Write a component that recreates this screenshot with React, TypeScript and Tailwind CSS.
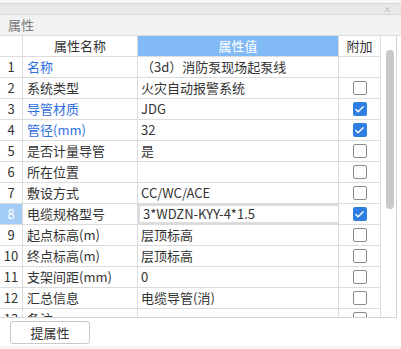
import { Check, X } from "lucide-react";

interface Row {
  no: number;
  name: string;
  value: string;
  blue?: boolean;
  check?: boolean | null;
  selected?: boolean;
}

const rows: Row[] = [
  { no: 1, name: "名称", value: "（3d）消防泵现场起泵线", blue: true, check: null },
  { no: 2, name: "系统类型", value: "火灾自动报警系统", check: false },
  { no: 3, name: "导管材质", value: "JDG", blue: true, check: true },
  { no: 4, name: "管径(mm)", value: "32", blue: true, check: true },
  { no: 5, name: "是否计量导管", value: "是", check: false },
  { no: 6, name: "所在位置", value: "", check: false },
  { no: 7, name: "敷设方式", value: "CC/WC/ACE", check: false },
  { no: 8, name: "电缆规格型号", value: "3*WDZN-KYY-4*1.5", check: true, selected: true },
  { no: 9, name: "起点标高(m)", value: "层顶标高", check: false },
  { no: 10, name: "终点标高(m)", value: "层顶标高", check: false },
  { no: 11, name: "支架间距(mm)", value: "0", check: false },
  { no: 12, name: "汇总信息", value: "电缆导管(消)", check: false },
  { no: 13, name: "备注", value: "", check: false },
];

function Box({ checked }: { checked: boolean }) {
  if (checked) {
    return (
      <div className="flex h-[14px] w-[14px] items-center justify-center rounded-[2px] bg-[#2f7fe3]">
        <Check size={11} strokeWidth={3} className="text-white" />
      </div>
    );
  }
  return <div className="h-[14px] w-[14px] rounded-[2px] border border-[#8a8a8a] bg-white" />;
}

export default function App() {
  return (
    <div
      className="relative h-[349px] w-[401px] overflow-hidden bg-white text-[13px] text-[#333]"
      style={{ fontFamily: '"Microsoft YaHei", "Noto Sans CJK SC", sans-serif' }}
    >
      <div className="h-[3px] bg-[#f7f7f7]" />
      <div className="flex h-[12px] items-center justify-end border-y border-[#d8d8d8] bg-[#e8e8e8] pr-[9px]">
        <X size={9} strokeWidth={1.5} className="text-[#999]" />
      </div>
      <div className="flex h-[21px] items-center border-b border-[#dcdcdc] bg-[#f2f2f2] pl-[8px] text-[#7a7a7a]">
        属性
      </div>

      <div className="flex h-[282px] w-[397px] border-r border-b border-[#d4d4d4]">
        <div className="w-[381px] overflow-hidden">
          <div className="flex h-[21px] border-b border-[#dcdcdc]">
            <div className="w-[23px] border-r border-[#dcdcdc]" />
            <div className="flex w-[115px] items-center justify-center border-r border-[#dcdcdc]">
              属性名称
            </div>
            <div className="flex w-[201px] items-center justify-center border-r border-[#dcdcdc] bg-[#82baf6] text-white">
              属性值
            </div>
            <div className="flex w-[42px] items-center justify-center border-r border-[#dcdcdc]">附加</div>
          </div>
          {rows.map((r) => (
            <div key={r.no} className="flex h-[21px] border-b border-[#dcdcdc]">
              <div
                className={`flex w-[23px] items-center justify-center border-r border-[#dcdcdc] ${
                  r.selected ? "bg-[#a3cdf7] text-white" : ""
                }`}
              >
                {r.no}
              </div>
              <div
                className={`flex w-[115px] items-center border-r border-[#dcdcdc] pl-[4px] ${
                  r.blue ? "text-[#2f6fe0]" : ""
                }`}
              >
                {r.name}
              </div>
              <div
                className={`flex w-[201px] items-center border-r border-[#dcdcdc] pl-[3px] ${
                  r.selected ? "border-2 border-[#7a7a7a]" : ""
                }`}
              >
                {r.value}
              </div>
              <div className="flex w-[42px] items-center justify-center border-r border-[#dcdcdc]">
                {r.check !== null && r.check !== undefined && <Box checked={r.check} />}
              </div>
            </div>
          ))}
        </div>
        <div className="flex-1 pt-[14px] pl-[5px]">
          <div className="h-[159px] w-[8px] rounded-full bg-[#c8c8c8]" />
        </div>
      </div>

      <div className="pl-[10px] pt-[3px]">
        <button className="h-[23px] w-[80px] rounded-[3px] border border-[#c8c8c8] bg-white text-[13px] text-[#333]">
          提属性
        </button>
      </div>
      <div className="absolute bottom-0 left-0 h-[3px] w-full bg-[#f5f5f5]" />
    </div>
  );
}
